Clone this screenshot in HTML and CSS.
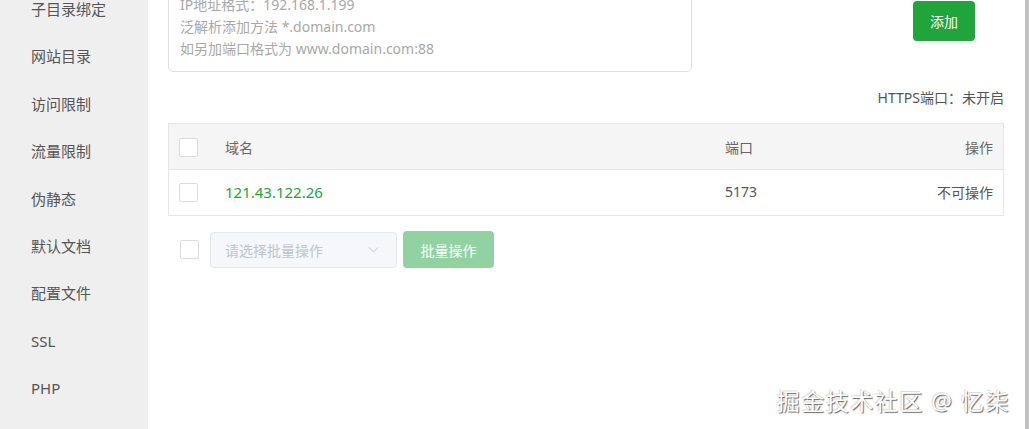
FILE: index.html
```html
<!DOCTYPE html>
<html lang="zh-CN">
<head>
    <meta charset="UTF-8">
    <meta name="viewport" content="width=device-width, initial-scale=1.0">
    <title>域名管理</title>
    <link rel="stylesheet" href="styles.css">
</head>
<body>
    <div class="page">
        <ul class="side-menu">
            <li>子目录绑定</li>
            <li>网站目录</li>
            <li>访问限制</li>
            <li>流量限制</li>
            <li>伪静态</li>
            <li>默认文档</li>
            <li>配置文件</li>
            <li>SSL</li>
            <li>PHP</li>
        </ul>

        <div class="main">
            <div class="add-row">
                <div class="domain-input">
                    <div>IP地址格式：192.168.1.199</div>
                    <div>泛解析添加方法 *.domain.com</div>
                    <div>如另加端口格式为 www.domain.com:88</div>
                </div>
                <button class="btn-add">添加</button>
            </div>

            <div class="https-tip">HTTPS端口：未开启</div>

            <table class="domain-table">
                <thead>
                    <tr>
                        <th class="col-check"><span class="checkbox"></span></th>
                        <th>域名</th>
                        <th class="col-port">端口</th>
                        <th class="col-op">操作</th>
                    </tr>
                </thead>
                <tbody>
                    <tr>
                        <td class="col-check"><span class="checkbox"></span></td>
                        <td><a class="domain-link">121.43.122.26</a></td>
                        <td class="col-port">5173</td>
                        <td class="col-op">不可操作</td>
                    </tr>
                </tbody>
            </table>

            <div class="batch-bar">
                <span class="checkbox"></span>
                <div class="batch-select">
                    <span>请选择批量操作</span>
                    <svg class="chevron" width="11" height="6" viewBox="0 0 11 6">
                        <path d="M1 0.5 L5.5 5 L10 0.5" fill="none" stroke="#c0c4cc" stroke-width="1"/>
                    </svg>
                </div>
                <button class="btn-batch">批量操作</button>
            </div>
        </div>

        <div class="scroll-edge"></div>
    </div>

    <div class="watermark">掘金技术社区 @ 忆柒</div>
</body>
</html>
```

FILE: styles.css
```css
html, body {
    margin: 0;
    height: 100%;
    overflow: hidden;
}

body {
    font-family: "Noto Sans", "Noto Sans CJK SC", sans-serif;
    font-size: 15px;
    color: #666;
    background-color: #fff;
}

.page {
    display: flex;
    height: 429px;
}

.side-menu {
    list-style: none;
    width: 148px;
    margin: 0;
    padding: 0;
    background-color: #efefef;
    flex-shrink: 0;
}

.side-menu li {
    height: 47.4px;
    line-height: 47.4px;
    padding-left: 31px;
    color: #555;
    white-space: nowrap;
}

.side-menu li:first-child {
    margin-top: -14px;
}

.main {
    flex: 1;
    padding: 0 21px 0 20px;
    min-width: 0;
}

.add-row {
    display: flex;
    justify-content: space-between;
    align-items: flex-start;
}

.domain-input {
    width: 524px;
    box-sizing: border-box;
    margin-top: -15px;
    padding: 8px 11px 11px;
    border: 1px solid #dcdfe6;
    border-radius: 5px;
    font-size: 14px;
    line-height: 22px;
    color: #a8a8a8;
}

.btn-add {
    width: 62px;
    height: 40px;
    margin-top: 1px;
    margin-right: 29px;
    border: none;
    border-radius: 4px;
    background-color: #20a53a;
    color: #fff;
    font-family: inherit;
    font-size: 14px;
    cursor: pointer;
}

.https-tip {
    text-align: right;
    margin-top: 16px;
    line-height: 20px;
    font-size: 14px;
    color: #555;
}

.domain-table {
    width: 100%;
    margin-top: 15px;
    border-collapse: collapse;
    border: 1px solid #e6e6e6;
}

.domain-table th,
.domain-table td {
    height: 45px;
    padding: 0;
    text-align: left;
    font-weight: normal;
    font-size: 14px;
    border-bottom: 1px solid #e6e6e6;
}

.domain-table thead tr {
    background-color: #f5f5f5;
}

.domain-table .col-check {
    width: 46px;
    padding-left: 10px;
}

.domain-table .col-port {
    width: 148px;
}

.domain-table .col-op {
    width: 120px;
    text-align: right;
    padding-right: 10px;
}

.domain-table td {
    color: #555;
}

.domain-table tbody td {
    height: 43px;
    padding-bottom: 2px;
}

.checkbox {
    display: inline-block;
    width: 17px;
    height: 17px;
    border: 1px solid #dcdcdc;
    border-radius: 2px;
    background-color: #fff;
    vertical-align: middle;
}

.domain-link {
    color: #20a53a;
    font-size: 15px;
    cursor: pointer;
}

.batch-bar {
    display: flex;
    align-items: center;
    margin-top: 15px;
    padding-left: 12px;
}

.batch-select {
    display: flex;
    align-items: center;
    justify-content: space-between;
    width: 187px;
    height: 36px;
    box-sizing: border-box;
    margin-left: 11px;
    padding: 0 17px 0 14px;
    background-color: #f5f7fa;
    border: 1px solid #e4e7ed;
    border-radius: 4px;
    color: #c0c4cc;
    font-size: 14px;
}

.btn-batch {
    width: 91px;
    height: 37px;
    margin-left: 6px;
    border: none;
    border-radius: 4px;
    background-color: #90d3a0;
    color: #fff;
    font-family: inherit;
    font-size: 14px;
}

.scroll-edge {
    width: 4px;
    flex-shrink: 0;
    background-color: #c1c1c1;
}

.watermark {
    position: absolute;
    right: 19px;
    top: 383px;
    font-size: 23px;
    letter-spacing: 1.5px;
    color: #fff;
    text-shadow: 1px 1px 1px #666, -1px -1px 0 #ddd;
}
```
